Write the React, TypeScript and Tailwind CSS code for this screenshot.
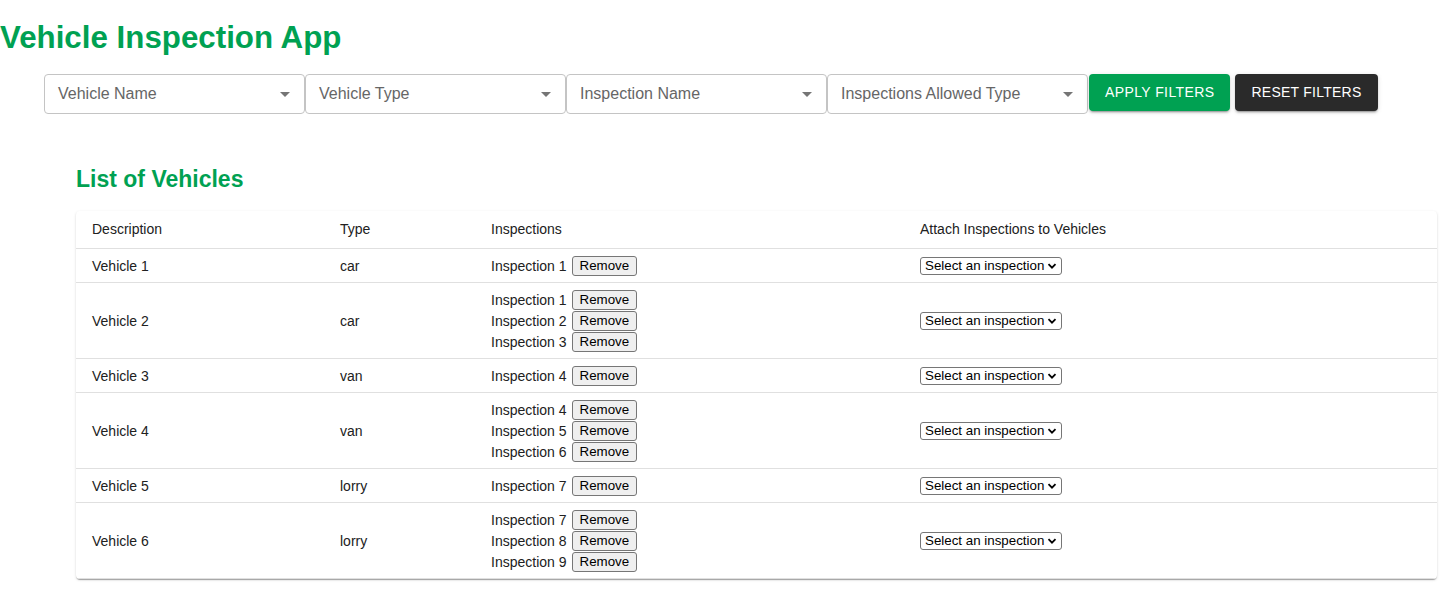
import React from "react";

const vehicles = [
  { name: "Vehicle 1", type: "car", inspections: ["Inspection 1"] },
  { name: "Vehicle 2", type: "car", inspections: ["Inspection 1", "Inspection 2", "Inspection 3"] },
  { name: "Vehicle 3", type: "van", inspections: ["Inspection 4"] },
  { name: "Vehicle 4", type: "van", inspections: ["Inspection 4", "Inspection 5", "Inspection 6"] },
  { name: "Vehicle 5", type: "lorry", inspections: ["Inspection 7"] },
  { name: "Vehicle 6", type: "lorry", inspections: ["Inspection 7", "Inspection 8", "Inspection 9"] },
];

const filters = ["Vehicle Name", "Vehicle Type", "Inspection Name", "Inspections Allowed Type"];

function FilterSelect({ label }: { label: string }) {
  return (
    <div className="flex h-[40px] w-[261px] items-center justify-between rounded-[4px] border border-[#c4c4c4] bg-white pl-[13px] pr-[7px]">
      <span className="text-[16px] text-[#666666]">{label}</span>
      <svg width="24" height="24" viewBox="0 0 24 24" className="fill-[#757575]">
        <path d="M7 10l5 5 5-5z" />
      </svg>
    </div>
  );
}

function NativeSelect() {
  return (
    <div className="relative inline-flex h-[18px] w-[142px] items-center rounded-[3px] border border-[#767676] bg-white pl-[4px]">
      <span className="text-[13.33px] leading-[16px] text-black">Select an inspection</span>
      <svg
        width="10"
        height="10"
        viewBox="0 0 10 10"
        className="absolute right-[4px] top-[3px]"
        fill="none"
        stroke="#000"
        strokeWidth="1.8"
      >
        <path d="M1.5 3.2 5 6.7 8.5 3.2" />
      </svg>
    </div>
  );
}

export default function App() {
  return (
    <div className="min-h-[595px] bg-white font-['Liberation_Sans',Arial,sans-serif] text-[#212121]">
      <h1 className="pt-[20px] text-[31.3px] font-bold leading-[36px] text-[#00a152]">Vehicle Inspection App</h1>

      <div className="mt-[18px] flex items-start pl-[44px]">
        {filters.map((f) => (
          <FilterSelect key={f} label={f} />
        ))}
        <button className="ml-[1px] h-[37px] rounded-[4px] bg-[#00a152] px-[16px] text-[14px] font-medium uppercase tracking-[0.4px] text-white shadow-[0px_3px_1px_-2px_rgba(0,0,0,0.2),0px_2px_2px_0px_rgba(0,0,0,0.14),0px_1px_5px_0px_rgba(0,0,0,0.12)]">
          Apply Filters
        </button>
        <button className="ml-[5px] h-[37px] rounded-[4px] bg-[#2a2a2a] px-[16px] text-[14px] font-medium uppercase tracking-[0.25px] text-white shadow-[0px_3px_1px_-2px_rgba(0,0,0,0.2),0px_2px_2px_0px_rgba(0,0,0,0.14),0px_1px_5px_0px_rgba(0,0,0,0.12)]">
          Reset Filters
        </button>
      </div>

      <div className="pl-[76px] pr-[14px]">
        <h2 className="mt-[51px] text-[23px] font-bold leading-[28px] text-[#00a152]">List of Vehicles</h2>

        <div className="mt-[18px] overflow-hidden rounded-[4px] bg-white shadow-[0px_2px_1px_-1px_rgba(0,0,0,0.2),0px_1px_1px_0px_rgba(0,0,0,0.14),0px_1px_3px_0px_rgba(0,0,0,0.12)]">
          <table className="w-full border-collapse text-left text-[14px]">
            <thead>
              <tr className="border-b border-[#e0e0e0]">
                <th className="w-[248px] px-[16px] py-[6px] font-normal leading-[25px]">Description</th>
                <th className="w-[151px] px-[16px] py-[6px] font-normal leading-[25px]">Type</th>
                <th className="w-[429px] px-[16px] py-[6px] font-normal leading-[25px]">Inspections</th>
                <th className="px-[16px] py-[6px] font-normal leading-[25px]">Attach Inspections to Vehicles</th>
              </tr>
            </thead>
            <tbody>
              {vehicles.map((v) => (
                <tr key={v.name} className="border-b border-[#e0e0e0]">
                  <td className="px-[16px] py-[6px] align-middle leading-[20px]">{v.name}</td>
                  <td className="px-[16px] py-[6px] align-middle leading-[20px]">{v.type}</td>
                  <td className="px-[16px] py-[6px] align-middle">
                    {v.inspections.map((ins, i) => (
                      <div key={i} className="flex h-[21px] items-center">
                        <span className="leading-[20px]">{ins}</span>
                        <button className="ml-[5px] h-[20px] rounded-[3px] border border-[#767676] bg-[#efefef] px-[7px] text-[13.33px] leading-[16px] text-black">
                          Remove
                        </button>
                      </div>
                    ))}
                  </td>
                  <td className="px-[16px] py-[6px] align-middle">
                    <NativeSelect />
                  </td>
                </tr>
              ))}
            </tbody>
          </table>
        </div>
      </div>
    </div>
  );
}
